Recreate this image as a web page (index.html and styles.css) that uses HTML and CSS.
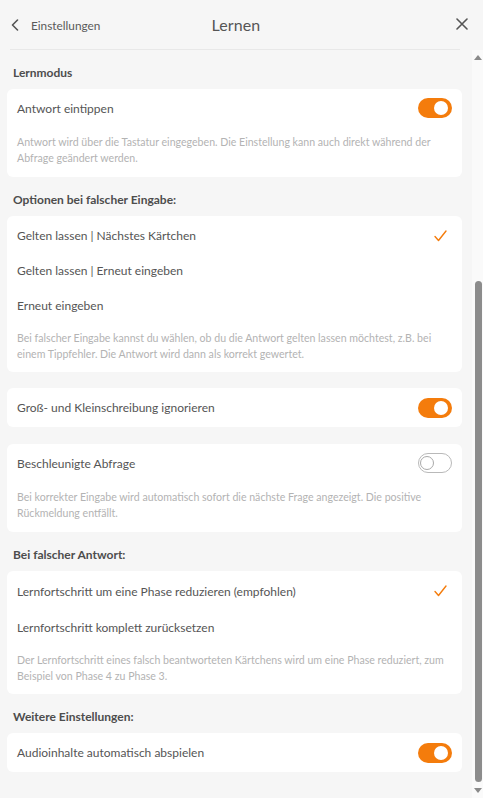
FILE: index.html
```html
<!DOCTYPE html>
<html lang="de">
<head>
<meta charset="utf-8">
<title>Lernen</title>
<link rel="stylesheet" href="styles.css">
</head>
<body>
<div class="app">
  <header class="header">
    <button class="back" type="button">
      <svg class="chev" width="8" height="12" viewBox="0 0 8 12"><path d="M6.5 1 L1.5 6 L6.5 11" fill="none" stroke="#555" stroke-width="1.6" stroke-linecap="round" stroke-linejoin="round"/></svg>
      <span>Einstellungen</span>
    </button>
    <h1 class="title">Lernen</h1>
    <button class="close" type="button" aria-label="Schließen">
      <svg width="12" height="12" viewBox="0 0 12 12"><path d="M1 1 L11 11 M11 1 L1 11" fill="none" stroke="#555" stroke-width="1.6" stroke-linecap="round"/></svg>
    </button>
  </header>
  <div class="divider"></div>
  <div class="body">
    <main class="content">
      <h2 class="section-title">Lernmodus</h2>
      <section class="card">
        <div class="row"><span>Antwort eintippen</span><span class="toggle on"><span class="knob"></span></span></div>
        <p class="desc">Antwort wird über die Tastatur eingegeben. Die Einstellung kann auch direkt während der Abfrage geändert werden.</p>
      </section>

      <h2 class="section-title">Optionen bei falscher Eingabe:</h2>
      <section class="card list">
        <div class="row opt"><span>Gelten lassen | Nächstes Kärtchen</span><svg class="check" width="13" height="12" viewBox="0 0 13 12"><path d="M1 6.5 L4.5 10.5 L12 1" fill="none" stroke="#f47c0c" stroke-width="1.4" stroke-linecap="round" stroke-linejoin="round"/></svg></div>
        <div class="row opt"><span>Gelten lassen | Erneut eingeben</span></div>
        <div class="row opt"><span>Erneut eingeben</span></div>
        <p class="desc">Bei falscher Eingabe kannst du wählen, ob du die Antwort gelten lassen möchtest, z.B. bei einem Tippfehler. Die Antwort wird dann als korrekt gewertet.</p>
      </section>

      <section class="card single">
        <div class="row"><span>Groß- und Kleinschreibung ignorieren</span><span class="toggle on"><span class="knob"></span></span></div>
      </section>

      <section class="card single next">
        <div class="row"><span>Beschleunigte Abfrage</span><span class="toggle off"><span class="knob"></span></span></div>
        <p class="desc">Bei korrekter Eingabe wird automatisch sofort die nächste Frage angezeigt. Die positive Rückmeldung entfällt.</p>
      </section>

      <h2 class="section-title">Bei falscher Antwort:</h2>
      <section class="card list">
        <div class="row opt2"><span>Lernfortschritt um eine Phase reduzieren (empfohlen)</span><svg class="check" width="13" height="12" viewBox="0 0 13 12"><path d="M1 6.5 L4.5 10.5 L12 1" fill="none" stroke="#f47c0c" stroke-width="1.4" stroke-linecap="round" stroke-linejoin="round"/></svg></div>
        <div class="row opt2"><span>Lernfortschritt komplett zurücksetzen</span></div>
        <p class="desc">Der Lernfortschritt eines falsch beantworteten Kärtchens wird um eine Phase reduziert, zum Beispiel von Phase 4 zu Phase 3.</p>
      </section>

      <h2 class="section-title">Weitere Einstellungen:</h2>
      <section class="card">
        <div class="row"><span>Audioinhalte automatisch abspielen</span><span class="toggle on"><span class="knob"></span></span></div>
      </section>
    </main>
    <div class="scrollbar" aria-hidden="true">
      <span class="arrow up"></span>
      <div class="track"><div class="thumb"></div></div>
      <span class="arrow down"></span>
    </div>
  </div>
</div>
</body>
</html>
```
FILE: styles.css
```css
* { box-sizing: border-box; }
html, body { margin: 0; padding: 0; }
body {
  background: #f6f6f6;
  font-family: Lato, "Open Sans", sans-serif;
  color: #555;
  width: 483px;
  height: 798px;
  overflow: hidden;
}
.app {
  display: flex;
  flex-direction: column;
  height: 798px;
}
.header {
  display: grid;
  grid-template-columns: 1fr auto 1fr;
  align-items: center;
  height: 49px;
  padding: 0 4px;
  margin-right: 11px;
}
.back {
  justify-self: start;
  display: flex;
  align-items: center;
  gap: 12px;
  background: none;
  border: 0;
  padding: 1px 0 0 7px;
  font: inherit;
  font-size: 11.8px;
  color: #5a5a5a;
  cursor: pointer;
}
.title {
  margin: 0;
  font-size: 16px;
  font-weight: 400;
  color: #555;
  letter-spacing: 0.1px;
}
.close {
  justify-self: end;
  display: flex;
  background: none;
  border: 0;
  padding: 0;
  margin-bottom: 2px;
  cursor: pointer;
}
.divider {
  height: 1px;
  background: #e8e8e8;
  margin: 0 23px 0 10px;
}
.body {
  display: flex;
  flex: 1;
  min-height: 0;
}
.content {
  flex: 1;
  padding: 0 10px 25px 7px;
  overflow: hidden;
}
.section-title {
  margin: 15px 0 8px 6px;
  font-size: 12px;
  line-height: 16px;
  font-weight: 700;
  color: #4d4d4d;
}
.card {
  background: #fff;
  border-radius: 6px;
}
.card.single { margin-top: 16px; }
.card.single.next { margin-top: 17px; }
.section-title + .card.single { margin-top: 0; }
.card.list { padding-top: 2px; }
.row {
  display: flex;
  align-items: center;
  justify-content: space-between;
  height: 38px;
  padding: 0 10px;
  font-size: 12px;
  color: #555;
}
.card.single .row, .card:last-child .row { height: 39px; }
.card.single.next .row { height: 38px; }
.row.opt { height: 35px; }
.row.opt2 { height: 36px; }
.check { margin-right: 5px; }
.desc {
  margin: 0;
  padding: 8px 10px 11px;
  font-size: 10.6px;
  line-height: 15.5px;
  color: #b3b3b3;
}
.card.list .desc { padding-top: 8px; padding-bottom: 10px; }
.toggle {
  position: relative;
  width: 34px;
  height: 20px;
  border-radius: 10px;
  flex-shrink: 0;
}
.toggle.on { background: #f47c0c; }
.toggle.off { background: #fff; border: 1px solid #b9b9b9; }
.knob {
  position: absolute;
  top: 3px;
  width: 14px;
  height: 14px;
  border-radius: 50%;
  background: #fff;
}
.toggle.on .knob { right: 4px; }
.toggle.off .knob { left: 1px; top: 2px; border: 1px solid #a9a9a9; }
.scrollbar {
  width: 11px;
  display: flex;
  flex-direction: column;
  align-items: center;
  background: #fafafa;
}
.arrow {
  width: 0;
  height: 0;
  border-left: 4px solid transparent;
  border-right: 4px solid transparent;
}
.arrow.up { border-bottom: 5px solid #8a8a8a; margin-top: 5px; }
.arrow.down { border-top: 5px solid #8a8a8a; margin: 6px 0 5px; }
.track {
  flex: 1;
  width: 100%;
  display: flex;
  flex-direction: column;
  justify-content: flex-end;
  align-items: center;
  margin-top: 5px;
}
.thumb {
  width: 7px;
  height: 501px;
  border-radius: 4px;
  background: #8c8c8c;
  margin-left: 1px;
}
```
